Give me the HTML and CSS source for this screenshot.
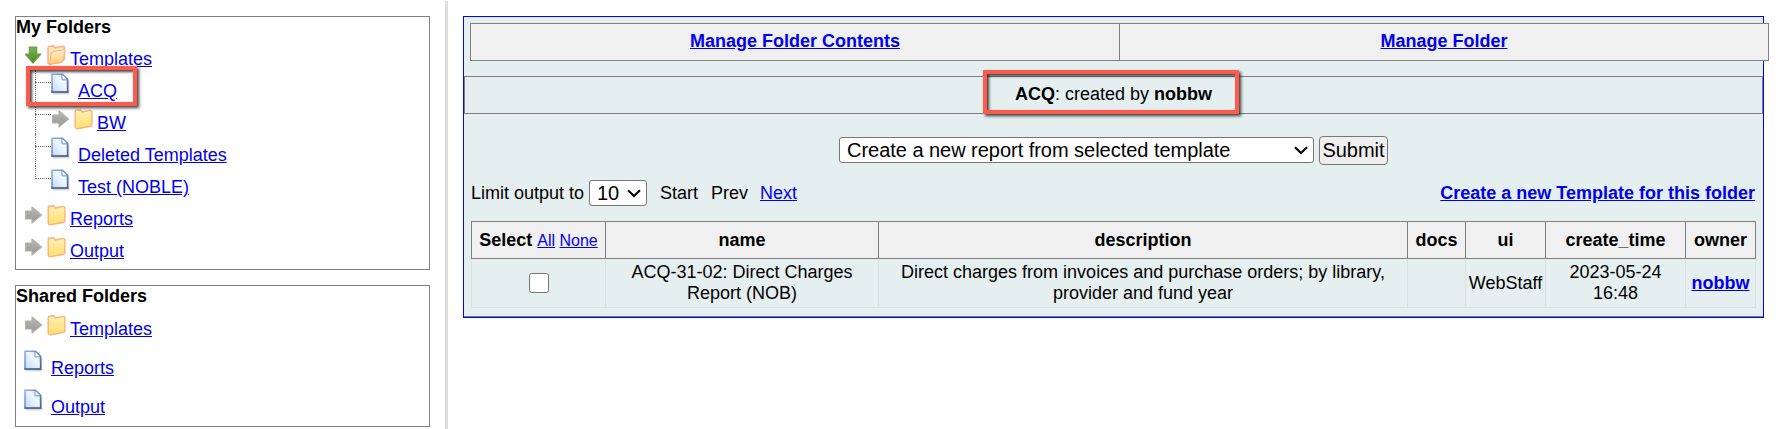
FILE: index.html
```html
<!DOCTYPE html>
<html lang="en">
<head>
<meta charset="utf-8">
<title>Reports</title>
<link rel="stylesheet" href="styles.css">
</head>
<body>
<svg class="defs" width="0" height="0">
  <defs>
    <linearGradient id="gDoc" x1="1" y1="0" x2="0" y2="1"><stop offset="0" stop-color="#c3daf8"/><stop offset=".4" stop-color="#f1f7fe"/><stop offset="1" stop-color="#bfdafa"/></linearGradient>
    <linearGradient id="gDocEdge" x1="0" y1="0" x2="1" y2="1"><stop offset="0" stop-color="#8fb0e6"/><stop offset=".6" stop-color="#6583bd"/><stop offset="1" stop-color="#465a88"/></linearGradient>
    <linearGradient id="gFold" x1="0" y1="0" x2="0" y2="1"><stop offset="0" stop-color="#fff0b4"/><stop offset="1" stop-color="#ffe06e"/></linearGradient>
    <linearGradient id="gOpen" x1="0" y1="0" x2="0" y2="1"><stop offset="0" stop-color="#fff0cc"/><stop offset="1" stop-color="#fdcb74"/></linearGradient>
    <linearGradient id="gGray" x1="0" y1="0" x2="0" y2="1"><stop offset="0" stop-color="#b9b9b6"/><stop offset="1" stop-color="#969693"/></linearGradient>
    <linearGradient id="gGreen" x1="0" y1="0" x2="0" y2="1"><stop offset="0" stop-color="#80ad5c"/><stop offset="1" stop-color="#4b8c20"/></linearGradient>
    <symbol id="doc" viewBox="0 0 19 22">
      <path d="M2 3H14L18.3 8V21.5H2Z" fill="#000" opacity=".15"/>
      <path d="M1 1.2H11.5L16.6 6.4V19H1Z" fill="url(#gDoc)" stroke="url(#gDocEdge)" stroke-width="1.6"/>
      <path d="M11 1.2V6.8H16.6Z" fill="#fff" stroke="#6f93d0" stroke-width="1"/>
      <path d="M.4 19.1H17.4" stroke="#566c96" stroke-width="1.6"/>
    </symbol>
    <symbol id="folder" viewBox="0 0 19 21">
      <path d="M1.2 2.6Q1.3 1 2.8 1L6.8 .8L8.4 3L15.9 1.4Q17.9 1.2 17.9 3V15.8Q17.8 17 16.6 17.3L3.6 19.8Q1.4 20 1.2 18Z" fill="url(#gFold)" stroke="#f9b27c" stroke-width="1.4" stroke-linejoin="round"/>
    </symbol>
    <symbol id="folder-open" viewBox="0 0 19 21">
      <path d="M1 3Q1 1.6 2.4 1.4L6.3 .8L8 2.8L15.6 1.2Q17.4 1.2 17.4 2.5V14L14.6 17.2L3 19.2Q1 19.2 1 17.4Z" fill="#ffe7c0" stroke="#f7ad7c" stroke-width="1.4" stroke-linejoin="round"/>
      <path d="M2.3 19L4.4 8Q4.8 6.8 6.2 6.5L17 4.7Q18.4 4.7 18.1 6L15.7 15.6Q15.3 17 14 17.2Z" fill="url(#gOpen)" stroke="#f9b27c" stroke-width="1" stroke-linejoin="round"/>
    </symbol>
    <symbol id="right" viewBox="0 0 17 18">
      <path d="M.6 5H7V1L16.6 9L7 17V13H.6Z" fill="url(#gGray)" stroke="#b0b0ad" stroke-width="1.2" stroke-linejoin="round"/>
    </symbol>
    <symbol id="down" viewBox="0 0 17 18">
      <path d="M4.3 1H11.7V8.2H15.8L8 17L.4 8.2H4.3Z" fill="url(#gGreen)" stroke="#6a9d48" stroke-width="1.2" stroke-linejoin="round"/>
    </symbol>
  </defs>
</svg>
<main class="layout">
  <nav class="sidebar">
    <section class="panel mine">
      <h2>My Folders</h2>
      <div class="row"><svg class="arr"><use href="#down"/></svg><svg class="fld"><use href="#folder-open"/></svg><a href="#">Templates</a></div>
      <div class="branch">
        <div class="row leaf"><svg class="doc"><use href="#doc"/></svg><a href="#">ACQ</a><span class="mark mark-acq"></span></div>
        <div class="row sub"><svg class="arr"><use href="#right"/></svg><svg class="fld"><use href="#folder"/></svg><a href="#">BW</a></div>
        <div class="row leaf"><svg class="doc"><use href="#doc"/></svg><a href="#">Deleted Templates</a></div>
        <div class="row leaf last"><svg class="doc"><use href="#doc"/></svg><a href="#">Test (NOBLE)</a></div>
      </div>
      <div class="row"><svg class="arr"><use href="#right"/></svg><svg class="fld"><use href="#folder"/></svg><a href="#">Reports</a></div>
      <div class="row"><svg class="arr"><use href="#right"/></svg><svg class="fld"><use href="#folder"/></svg><a href="#">Output</a></div>
    </section>
    <section class="panel shared">
      <h2>Shared Folders</h2>
      <div class="row"><svg class="arr"><use href="#right"/></svg><svg class="fld"><use href="#folder"/></svg><a href="#">Templates</a></div>
      <div class="row root"><svg class="doc"><use href="#doc"/></svg><a href="#">Reports</a></div>
      <div class="row root"><svg class="doc"><use href="#doc"/></svg><a href="#">Output</a></div>
    </section>
  </nav>
  <div class="divider"></div>
  <section class="content">
    <div class="tabs"><div><a href="#">Manage Folder Contents</a></div><div><a href="#">Manage Folder</a></div></div>
    <div class="owner-bar"><span><b>ACQ</b>: created by <b>nobbw</b></span><span class="mark mark-owner"></span></div>
    <div class="action"><span class="pickbox task"><select><option>Create a new report from selected template</option></select><svg class="chev" viewBox="0 0 14 9"><path d="M1 1.2L7 7L13 1.2"/></svg></span><button>Submit</button></div>
    <div class="pager"><span class="limit">Limit output to</span><span class="pickbox count"><select><option>10</option></select><svg class="chev" viewBox="0 0 14 9"><path d="M1 1.2L7 7L13 1.2"/></svg></span><span class="start">Start</span><span class="prev">Prev</span><a href="#">Next</a><a class="create" href="#">Create a new Template for this folder</a></div>
    <table>
      <colgroup><col class="c1"><col class="c2"><col class="c3"><col class="c4"><col class="c5"><col class="c6"><col class="c7"></colgroup>
      <thead><tr><th>Select <span class="pick"><a href="#">All</a> <a href="#">None</a></span></th><th>name</th><th>description</th><th>docs</th><th>ui</th><th>create_time</th><th>owner</th></tr></thead>
      <tbody><tr><td class="check"><input type="checkbox"></td><td>ACQ-31-02: Direct Charges<br>Report (NOB)</td><td>Direct charges from invoices and purchase orders; by library,<br>provider and fund year</td><td></td><td>WebStaff</td><td>2023-05-24<br>16:48</td><td><a href="#"><b>nobbw</b></a></td></tr></tbody>
    </table>
  </section>
</main>
</body>
</html>
```
FILE: styles.css
```css
* { box-sizing: border-box; }
body { margin: 0; height: 429px; overflow: hidden; background: #fff; color: #000; font: 18px/21px "Liberation Sans", Arial, sans-serif; }
a { color: #00e; text-decoration: underline; }
.defs { position: absolute; }
.layout { display: flex; height: 429px; padding-left: 15px; }
.sidebar { width: 415px; padding-top: 16px; }
.panel { border: 1px solid #808080; }
.mine { height: 254px; margin-bottom: 15px; }
.shared { height: 142px; }
h2 { margin: 0; font-size: 18px; line-height: 20px; height: 26px; }
.row { display: flex; position: relative; height: 32px; padding-left: 9px; white-space: nowrap; }
.row a { margin-top: 6px; line-height: 21px; }
.arr { width: 17px; height: 18px; margin: 3px 5px 0 0; }
.fld { width: 19px; height: 21px; margin: 2px 4px 0 0; }
.doc { width: 19px; height: 22px; }
.leaf { padding-left: 35px; }
.leaf .doc { margin: -2px 8px 0 0; }
.sub { padding-left: 36px; }
.branch .row::before { content: ""; position: absolute; left: 19px; top: -5px; width: 16px; height: 32px; border-left: 1px dotted #777; }
.branch .row::after { content: ""; position: absolute; left: 19px; top: 7px; width: 16px; border-top: 1px dotted #777; }
.branch .last::before { height: 13px; }
.root { height: 39px; padding-left: 8px; }
.root .doc { margin: 5px 8px 0 0; }
.root a { margin-top: 13px; }
.shared h2 { height: 27px; }
.mark { position: absolute; z-index: 2; border: 4px solid #ff5a4b; box-shadow: 2px 2px 3px rgba(0,0,0,.75), inset 2px 2px 3px rgba(0,0,0,.75); }
.mark-acq { left: 10px; top: -9px; width: 111px; height: 40px; }
.divider { width: 3px; margin: 1px 15px 0; background: #ddd; }
.content { width: 1301px; height: 302px; margin-top: 16px; border: 1px solid #00f; background: #e5efef; box-shadow: inset 0 -1px #808080; }
.tabs { display: grid; grid-template-columns: 648px 649px; width: 1299px; height: 38px; margin: 6px 0 0 6px; border: 1px solid #808080; background: #f0f0f0; text-align: center; font-weight: bold; line-height: 35px; }
.tabs div + div { border-left: 1px solid #808080; }
.owner-bar { position: relative; height: 38px; margin-top: 15px; border: 1px solid #808080; text-align: center; line-height: 34px; }
.mark-owner { left: 518px; top: -7px; width: 256px; height: 44px; }
.action { display: flex; gap: 5px; margin: 22px 0 0 375px; height: 29px; }
.pickbox { position: relative; height: 26px; }
select { display: block; width: 100%; height: 100%; appearance: none; font: 20px "Liberation Sans", Arial, sans-serif; letter-spacing: -.03px; border: 1px solid #767676; border-radius: 3px; background: #fff; color: #000; padding: 0 0 0 7px; }
.chev { position: absolute; right: 6px; top: 9px; width: 14px; height: 9px; fill: none; stroke: #000; stroke-width: 2.1; pointer-events: none; }
.task { width: 475px; margin-top: 1px; }
button { width: 69px; height: 29px; padding: 0; border: 1px solid #767676; border-radius: 4px; background: #efefef; color: #000; font: 20px "Liberation Sans", Arial, sans-serif; }
.pager { display: flex; align-items: center; height: 26px; margin: 15px 8px 15px 7px; white-space: nowrap; }
.limit { width: 118px; }
.count { width: 58px; }
.start { margin-left: 13px; width: 51px; }
.prev { width: 49px; }
.create { margin-left: auto; font-weight: bold; }
table { width: 1285px; margin-left: 7px; border-collapse: collapse; table-layout: fixed; text-align: center; }
.c1 { width: 134px; } .c2 { width: 273px; } .c3 { width: 529px; } .c4 { width: 58px; } .c5 { width: 80px; } .c6 { width: 140px; } .c7 { width: 70px; }
th { height: 37px; padding: 0; border: 1px solid #808080; background: #f0f0f0; white-space: nowrap; }
td { height: 49px; padding: 0; border: 1px solid #dbe0e0; white-space: nowrap; }
.check { padding-bottom: 2px; }
.pick { font-size: 16px; font-weight: normal; }
input { width: 20px; height: 20px; margin: 0; vertical-align: middle; }
```
